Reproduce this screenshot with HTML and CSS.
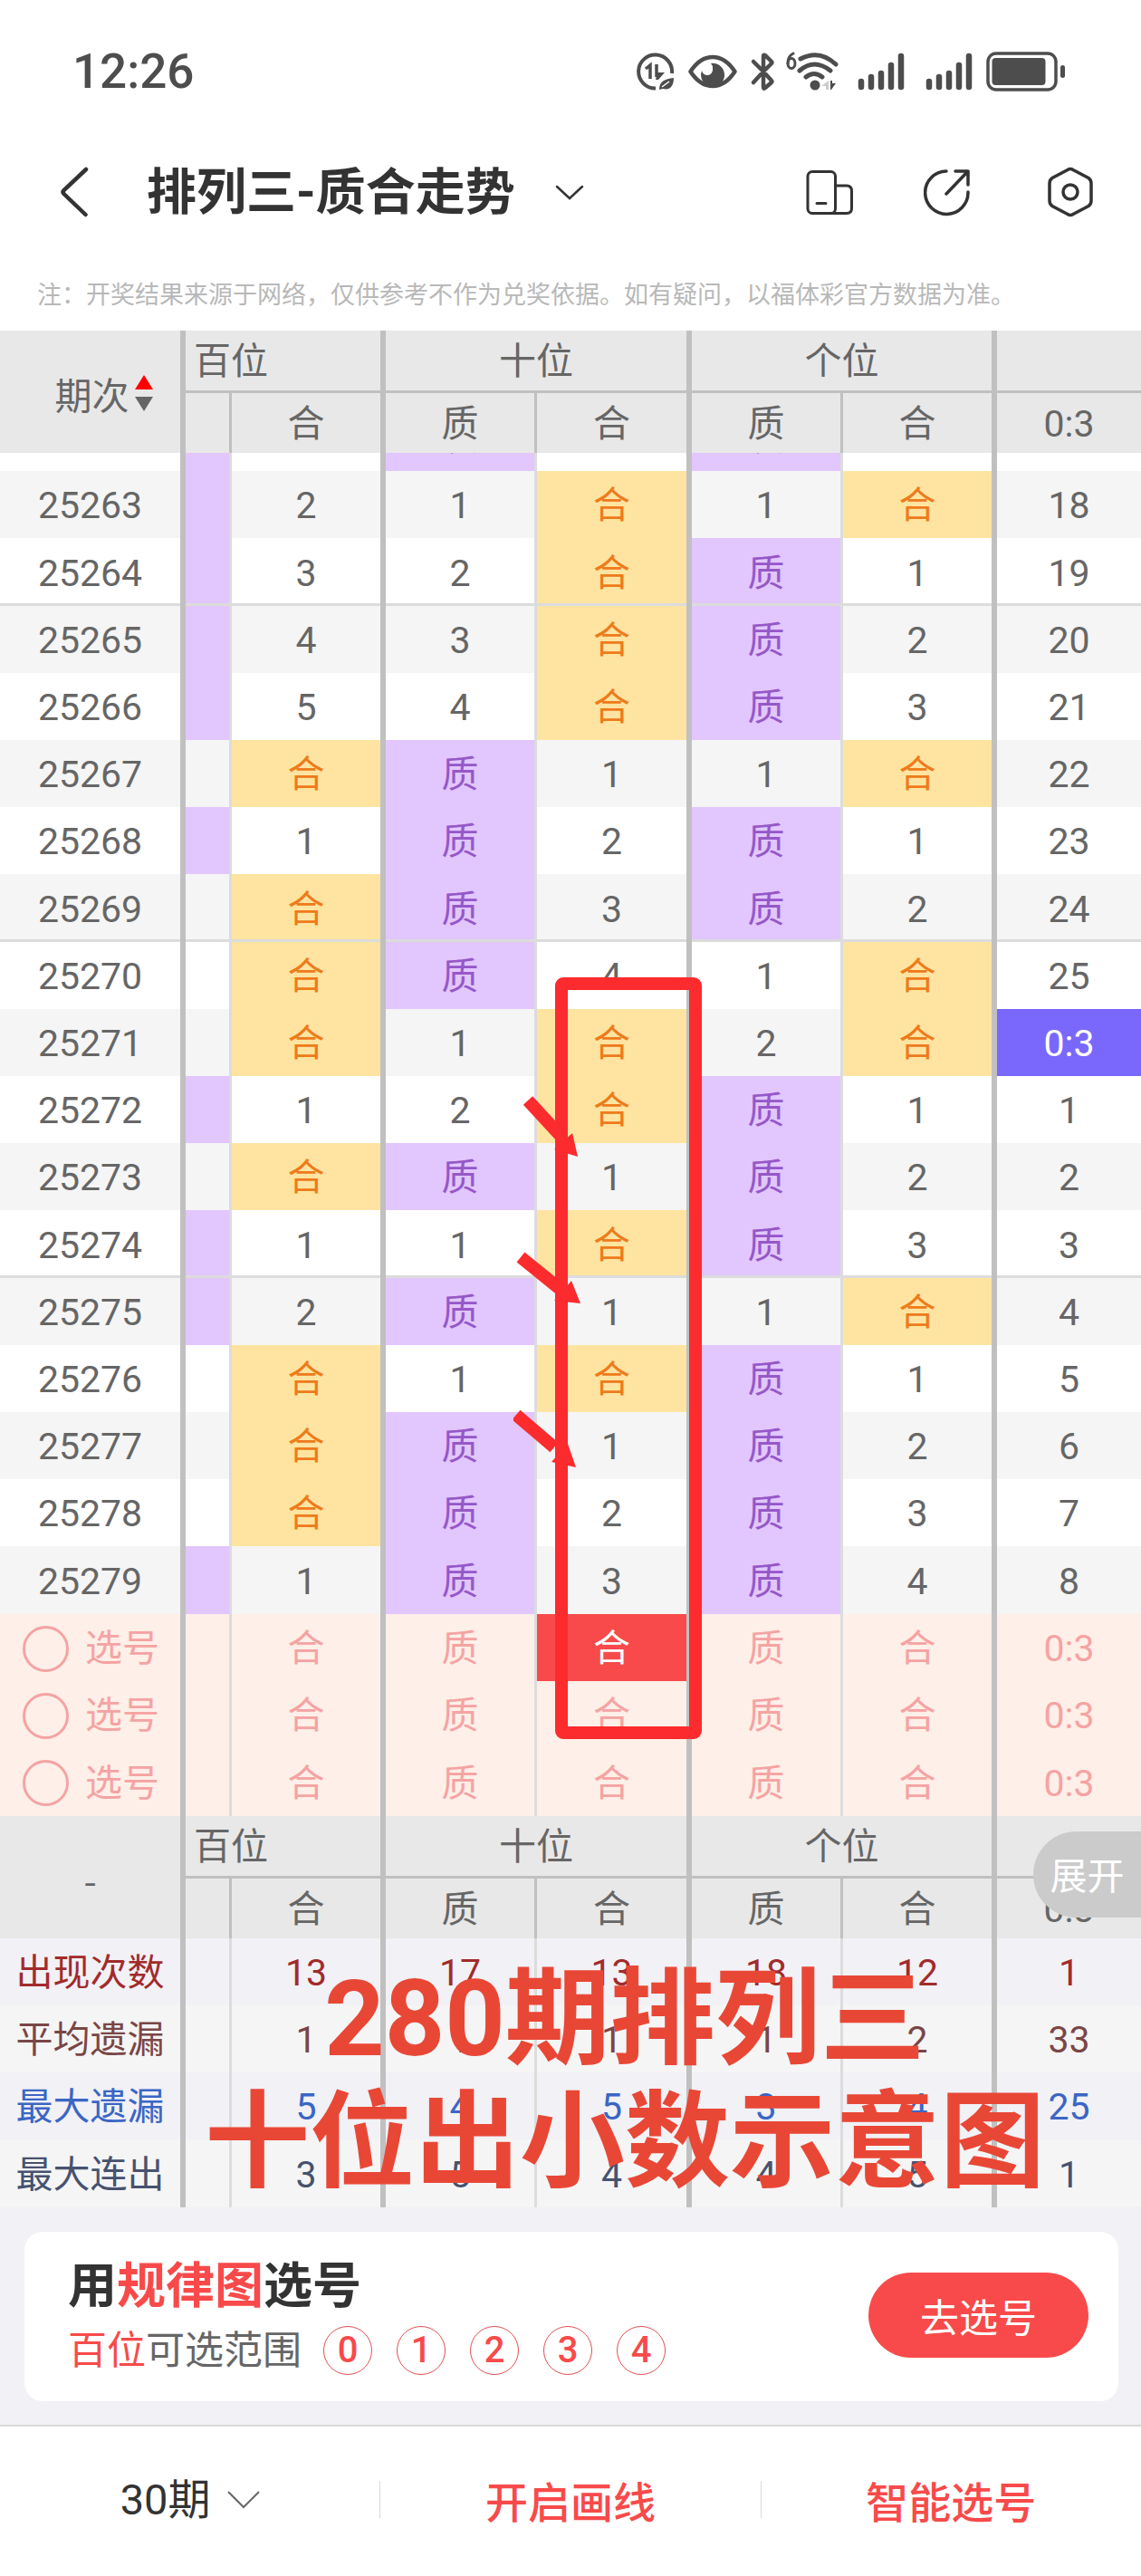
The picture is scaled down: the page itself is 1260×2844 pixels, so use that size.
FILE: index.html
```html
<!DOCTYPE html>
<html lang="zh-CN">
<head>
<meta charset="utf-8">
<title>排列三-质合走势</title>
<link rel="stylesheet" href="styles.css">
</head>
<body>

<div class="status">
	<span class="time">12:26</span>
	<div class="status-icons">
		<svg width="43" height="44" viewBox="703 56 43 44" fill="none" stroke="#4d4d4d" stroke-width="4">
			<path d="M742 80A18.500 18.500 0 1 0 724 96.500"/>
			<path d="M713 75l5-4v15M725 70v14" stroke-width="3.500"/>
			<path d="M726 79h8l-7 8h-3z" fill="#4d4d4d" stroke="none"/>
			<path d="M728 98c0-9 6-12 16-13 0 10-5 14-12 12z" fill="#4d4d4d" stroke="none"/>
			<path d="M731 95l8-6" stroke="#fff" stroke-width="1.500"/>
		</svg>
		<svg width="58" height="44" viewBox="758 56 58 44">
			<path d="M762.500 78Q773 62 787 62t24.500 16Q801 94 787 94t-24.500-16z" fill="none" stroke="#4d4d4d" stroke-width="4.500" stroke-linejoin="round"/>
			<path d="M785 69a13 13 0 1 1-10 8 6 6 0 0 0 12-2 7 7 0 0 0-2-6z" fill="#4d4d4d"/>
		</svg>
		<svg width="28" height="44" viewBox="828 56 28 44" fill="none" stroke="#4d4d4d" stroke-width="4.500" stroke-linecap="round" stroke-linejoin="round">
			<path d="M832 67l11 11 9-9q1-1 0-2l-7-7q-2-1-2 1v34q0 3 2 1l7-6q1-1 0-2l-9-10M832 90l11-12"/>
		</svg>
		<svg width="67" height="44" viewBox="868 56 67 44" fill="none" stroke="#4d4d4d" stroke-linecap="round">
			<path d="M876 58q-6 3-6 11" stroke-width="3"/>
			<ellipse cx="874" cy="69" rx="4" ry="5.500" stroke-width="3"/>
			<path d="M884 64Q905 53 923 70M883 77Q899 63 917 77M890 84Q899 77 908 84" stroke-width="5"/>
			<circle cx="900" cy="93" r="5.500" fill="#4d4d4d" stroke="none"/>
			<path d="M907 94l8-6v10h-3v-4z" fill="#ccc" stroke="none"/>
			<path d="M917 88h2v3h4l-5 7h-1z" fill="#4d4d4d" stroke="none"/>
		</svg>
		<svg width="63" height="44" viewBox="947 56 63 44" stroke="#4d4d4d" stroke-width="6.500" stroke-linecap="round">
			<path d="M951 89v6M962 84v11M973 80v15M984 71v24M995 61v34"/>
		</svg>
		<svg width="55" height="44" viewBox="1022 56 55 44" stroke="#4d4d4d" stroke-width="6.500" stroke-linecap="round">
			<path d="M1026 89v6M1037 84v11M1048 80v15M1059 71v24M1070 61v34"/>
		</svg>
		<svg width="88" height="44" viewBox="1089 56 88 44">
			<rect x="1091" y="58" width="75" height="40" rx="9" fill="none" stroke="#4d4d4d" stroke-width="3.500"/>
			<rect x="1095.500" y="63" width="59" height="30" rx="4" fill="#4d4d4d"/>
			<rect x="1171" y="71" width="5" height="14" rx="2.500" fill="#4d4d4d"/>
		</svg>
	</div>
</div>

<header class="nav">
	<button class="icon-btn back" aria-label="返回">
		<svg width="31" height="56" viewBox="67 183 31 56" fill="none" stroke="#333" stroke-width="4.500" stroke-linecap="round">
			<path d="M95 186L70.500 209q-2 2 0 4L94.500 236"/>
		</svg>
	</button>
	<label class="picker title">
		<select aria-label="走势类型"><option>排列三-质合走势</option></select>
		<svg width="32" height="18" viewBox="612 201 32 18" fill="none" stroke="#333" stroke-width="2.500" stroke-linecap="round">
			<path d="M614 204l14 13 14-13"/>
		</svg>
	</label>
	<div class="nav-icons">
		<button class="icon-btn" aria-label="布局">
			<svg width="52" height="56" viewBox="890 184 52 56" fill="none" stroke="#333" stroke-width="3" stroke-linecap="round">
				<rect x="892" y="189.500" width="30.500" height="46" rx="5"/>
				<path d="M922.500 205H935q5.500 0 5.500 6v19q0 5.500-5.500 5.500H918M902 224.500h10"/>
			</svg>
		</button>
		<button class="icon-btn" aria-label="分享">
			<svg width="59" height="56" viewBox="1020 184 59 56" fill="none" stroke="#333" stroke-width="3.500" stroke-linecap="round" stroke-linejoin="round">
				<path d="M1045 189A23.700 23.700 0 1 0 1069 212M1055 189h14v15M1069 189l-24 25"/>
			</svg>
		</button>
		<button class="icon-btn" aria-label="设置">
			<svg width="50" height="56" viewBox="1157 184 50 56" fill="none" stroke="#333" stroke-width="3.500">
				<path d="M1179 187.500q3-2 6 0l17 9q3 2 3 6v19q0 4-3 6l-17 9q-3 2-6 0l-17-9q-3-2-3-6v-19q0-4 3-6z"/>
				<circle cx="1182" cy="212" r="8"/>
			</svg>
		</button>
	</div>
</header>

<p class="note">注：开奖结果来源于网络，仅供参考不作为兑奖依据。如有疑问，以福体彩官方数据为准。</p>

<main class="chart">
	<table class="trend">
		<colgroup>
			<col class="c-issue"><col class="c-cut"><col class="c-last2"><col class="c-zhi"><col class="c-he"><col class="c-zhi"><col class="c-he2"><col class="c-ratio">
		</colgroup>
		<thead>
			<tr class="pos">
				<th rowspan="2" class="issue"><span class="sort">期次
					<svg width="20" height="40" viewBox="0 0 20 40"><path d="M10 0l10 16H0z" fill="#f00"/><path d="M0 24h20L10 40z" fill="#666"/></svg></span></th>
				<th colspan="2" class="cut">百位</th><th colspan="2">十位</th><th colspan="2">个位</th><th></th>
			</tr>
			<tr><th></th><th>合</th><th>质</th><th>合</th><th>质</th><th>合</th><th>0:3</th></tr>
		</thead>

		<!-- 开奖数据 -->
		<tbody class="data">
			<tr class="peek"><td></td><td class="z"></td><td></td><td class="z"><div>质</div></td><td></td><td class="z"><div>质</div></td><td></td><td></td></tr>
			<tr><td>25263</td><td class="z"></td><td>2</td><td>1</td><td class="h">合</td><td>1</td><td class="h">合</td><td>18</td></tr>
			<tr class="line"><td>25264</td><td class="z"></td><td>3</td><td>2</td><td class="h">合</td><td class="z">质</td><td>1</td><td>19</td></tr>
			<tr><td>25265</td><td class="z"></td><td>4</td><td>3</td><td class="h">合</td><td class="z">质</td><td>2</td><td>20</td></tr>
			<tr><td>25266</td><td class="z"></td><td>5</td><td>4</td><td class="h">合</td><td class="z">质</td><td>3</td><td>21</td></tr>
			<tr><td>25267</td><td></td><td class="h">合</td><td class="z">质</td><td>1</td><td>1</td><td class="h">合</td><td>22</td></tr>
			<tr><td>25268</td><td class="z"></td><td>1</td><td class="z">质</td><td>2</td><td class="z">质</td><td>1</td><td>23</td></tr>
			<tr class="line"><td>25269</td><td></td><td class="h">合</td><td class="z">质</td><td>3</td><td class="z">质</td><td>2</td><td>24</td></tr>
			<tr><td>25270</td><td></td><td class="h">合</td><td class="z">质</td><td>4</td><td>1</td><td class="h">合</td><td>25</td></tr>
			<tr><td>25271</td><td></td><td class="h">合</td><td>1</td><td class="h">合</td><td>2</td><td class="h">合</td><td class="hit">0:3</td></tr>
			<tr><td>25272</td><td class="z"></td><td>1</td><td>2</td><td class="h">合</td><td class="z">质</td><td>1</td><td>1</td></tr>
			<tr><td>25273</td><td></td><td class="h">合</td><td class="z">质</td><td>1</td><td class="z">质</td><td>2</td><td>2</td></tr>
			<tr class="line"><td>25274</td><td class="z"></td><td>1</td><td>1</td><td class="h">合</td><td class="z">质</td><td>3</td><td>3</td></tr>
			<tr><td>25275</td><td class="z"></td><td>2</td><td class="z">质</td><td>1</td><td>1</td><td class="h">合</td><td>4</td></tr>
			<tr><td>25276</td><td></td><td class="h">合</td><td>1</td><td class="h">合</td><td class="z">质</td><td>1</td><td>5</td></tr>
			<tr><td>25277</td><td></td><td class="h">合</td><td class="z">质</td><td>1</td><td class="z">质</td><td>2</td><td>6</td></tr>
			<tr><td>25278</td><td></td><td class="h">合</td><td class="z">质</td><td>2</td><td class="z">质</td><td>3</td><td>7</td></tr>
			<tr><td>25279</td><td class="z"></td><td>1</td><td class="z">质</td><td>3</td><td class="z">质</td><td>4</td><td>8</td></tr>
		</tbody>

		<!-- 选号 -->
		<tbody class="pick">
			<tr><td><label><input type="checkbox">选号</label></td><td></td><td>合</td><td>质</td><td class="on">合</td><td>质</td><td>合</td><td>0:3</td></tr>
			<tr><td><label><input type="checkbox">选号</label></td><td></td><td>合</td><td>质</td><td>合</td><td>质</td><td>合</td><td>0:3</td></tr>
			<tr><td><label><input type="checkbox">选号</label></td><td></td><td>合</td><td>质</td><td>合</td><td>质</td><td>合</td><td>0:3</td></tr>
		</tbody>

		<tbody class="head">
			<tr class="pos"><th rowspan="2">-</th><th colspan="2" class="cut">百位</th><th colspan="2">十位</th><th colspan="2">个位</th><th></th></tr>
			<tr><th></th><th>合</th><th>质</th><th>合</th><th>质</th><th>合</th><th>0:3</th></tr>
		</tbody>

		<!-- 统计 -->
		<tbody class="stat">
			<tr class="times"><td>出现次数</td><td></td><td>13</td><td>17</td><td>13</td><td>18</td><td>12</td><td>1</td></tr>
			<tr class="avg"><td>平均遗漏</td><td></td><td>1</td><td>1</td><td>1</td><td>1</td><td>2</td><td>33</td></tr>
			<tr class="max"><td>最大遗漏</td><td></td><td>5</td><td>4</td><td>5</td><td>3</td><td>4</td><td>25</td></tr>
			<tr class="run"><td>最大连出</td><td></td><td>3</td><td>5</td><td>4</td><td>4</td><td>5</td><td>1</td></tr>
		</tbody>
	</table>

	<!-- 红框和箭头 -->
	<svg class="marks" width="208" height="841" viewBox="567 1079 208 841" fill="none" stroke="#fc2b2e" stroke-width="14">
		<rect x="620" y="1086" width="148" height="827" rx="2" stroke-linejoin="round"/>
		<path d="M583 1215l36 39M575 1388l42 34M570 1562l42 36"/>
		<path d="M632 1251l6 26-26-8zM631 1414l10 25-29-3zM627 1594l9 26-27-6z" fill="#fc2b2e" stroke="none"/>
	</svg>

	<button class="expand">展开</button>
	<div class="caption">280期排列三<br>十位出小数示意图</div>
</main>

<section class="promo">
	<div class="card">
		<div>
			<h2>用<em>规律图</em>选号</h2>
			<div class="range"><span><em>百位</em>可选范围</span><ul><li>0</li><li>1</li><li>2</li><li>3</li><li>4</li></ul></div>
		</div>
		<button class="go">去选号</button>
	</div>
</section>

<footer class="tabs">
	<div class="tab">
		<label class="picker">
			<select aria-label="期数"><option>30期</option></select>
			<svg width="36" height="20" viewBox="0 0 36 20" fill="none" stroke="#666" stroke-width="2"><path d="M1 1l17 17L35 1"/></svg>
		</label>
	</div>
	<div class="tab"><button>开启画线</button></div>
	<div class="tab"><button>智能选号</button></div>
</footer>

</body>
</html>
```

FILE: styles.css
```css
* {
	box-sizing: border-box;
}
body {
	margin: 0;
	background-color: white;
	color: #666;
	font-family: Roboto, "Noto Sans CJK SC", sans-serif;
	font-size: 41px;
}
button, select {
	border: 0;
	padding: 0;
	background: none;
	color: inherit;
	font: inherit;
}
select {
	appearance: none;
}
svg {
	display: block;
}
em {
	color: #f84a4a;
	font-style: normal;
}

/* 状态栏 */
.status {
	display: flex;
	justify-content: space-between;
	align-items: center;
	height: 157px;
	padding: 0 83px 0 80px;
}
.time {
	color: #4d4d4d;
	font-size: 53px;
	font-weight: 500;
}
.status-icons {
	display: flex;
	gap: 12px;
}

/* 标题栏 */
.nav {
	display: flex;
	align-items: center;
	height: 110px;
	margin-bottom: 20px;
	padding: 0 53px 0 67px;
}
.back {
	margin-right: 64px;
}
.picker {
	display: flex;
	align-items: center;
	gap: 18px;
	color: #333;
}
.title {
	gap: 44px;
	font-size: 55px;
	font-weight: bold;
}
.nav-icons {
	display: flex;
	gap: 78px;
	margin-left: auto;
}
.note {
	margin: 0;
	padding-left: 41px;
	color: #b8b8b8;
	font-size: 27px;
	line-height: 78px;
}

/* 走势表 */
.chart {
	position: relative;
}
.trend {
	width: 100%;
	table-layout: fixed;
	border-collapse: separate;
	border-spacing: 0;
	line-height: 48px;
	text-align: center;
}
.c-issue {width: 205px;}
.c-cut {width: 51px;}
.c-last2 {width: 170px;}
.c-zhi {width: 167px;}
.c-he {width: 171px;}
.c-he2 {width: 170px;}
.c-ratio {width: 159px;}

.trend th, .trend td {
	height: 74px;
	padding: 2px 0 0;
	border: 0 solid #c0c0c0;
	font-weight: normal;
}
.trend tbody tr:last-child td, .trend .line td {
	height: 75px;
}
.trend tr > :nth-last-child(even) {
	border-right-width: 6px;
}
.trend td:nth-last-child(2n+3) {
	border-right: 3px solid #dcdcdc;
}
.trend th:nth-last-child(2n+3) {
	border-right-width: 3px;
}
.trend th {
	height: 66px;
	background-color: #e8e8e8;
}
.trend .pos th {
	height: 69px;
	border-right-width: 6px;
	border-bottom-width: 3px;
}
.trend .pos th[rowspan] {
	border-bottom-width: 0;
	font-family: "Noto Sans CJK SC", sans-serif;
}
.trend .pos th:last-child {
	border-right-width: 0;
}
.trend .cut {
	padding-left: 9px;
	text-align: left;
}
.sort {
	display: flex;
	justify-content: center;
	align-items: center;
	gap: 6px;
	padding-left: 30px;
}

.data tr:nth-child(even) {
	background-color: #f5f5f5;
}
.trend .peek td {
	height: 20px;
	padding: 0;
}
.peek div {
	display: flex;
	justify-content: center;
	align-items: flex-end;
	height: 20px;
	line-height: 74px;
	overflow: hidden;
}
.trend .z {
	background-color: #e2c6fe;
	color: #9558c8;
}
.trend .h {
	background-color: #ffe4a1;
	color: #ee7b1b;
}
.trend .hit {
	background-color: #7a68fd;
	color: white;
}
.line td {
	box-shadow: inset 0 -3px #dcdcdc;
}

.pick {
	background-color: #feefe8;
	color: #f5a3a3;
}
.pick label {
	display: flex;
	align-items: center;
	gap: 18px;
	padding-left: 25px;
}
.pick input {
	appearance: none;
	width: 51px;
	height: 51px;
	margin: 0;
	border: 3px solid #f5a3a3;
	border-radius: 50%;
}
.trend .on {
	background-color: #f84a4a;
	color: white;
}

.stat tr:nth-child(odd) {
	background-color: #f1f1f6;
}
.stat tr:nth-child(even) {
	background-color: #f5f5f5;
}
.times {color: #a22b2b;}
.avg {color: #7a4646;}
.max {color: #3b66c4;}
.run {color: #47526f;}

/* 表格上面的标注 */
.marks {
	position: absolute;
	top: 714px;
	left: 45%;
}
.expand {
	position: absolute;
	right: 0;
	bottom: 320px;
	width: 119px;
	height: 95px;
	padding-bottom: 4px;
	border-radius: 48px 0 0 48px;
	background-color: #cbcbcb;
	color: white;
}
.caption {
	position: absolute;
	right: 0;
	bottom: 4px;
	left: 120px;
	color: #e94736;
	font-size: 116px;
	font-weight: bold;
	line-height: 136px;
	text-align: center;
}

/* 选号卡片 */
.promo {
	padding: 27px 25px 26px 27px;
	background-color: #f1f1f6;
}
.card {
	display: flex;
	justify-content: space-between;
	align-items: center;
	height: 187px;
	padding: 0 33px 4px 48px;
	border-radius: 20px;
	background-color: white;
}
.card h2 {
	margin: 0;
	color: #333;
	font-size: 54px;
	font-weight: bold;
	line-height: 78px;
}
.range {
	display: flex;
	align-items: center;
	gap: 24px;
	font-size: 43px;
	line-height: 62px;
}
.range ul {
	display: flex;
	gap: 27px;
	margin: 0;
	padding: 0;
	list-style: none;
}
.range li {
	width: 54px;
	height: 54px;
	border: 1px solid #e05050;
	border-radius: 50%;
	color: #f84a4a;
	font-size: 40px;
	font-weight: 500;
	line-height: 52px;
	text-align: center;
}
.go {
	width: 243px;
	height: 94px;
	border-radius: 47px;
	background-color: #f84a4a;
	color: white;
	font-size: 43px;
}

/* 底栏 */
.tabs {
	display: flex;
	align-items: center;
	height: 167px;
	padding-bottom: 4px;
	border-top: 2px solid #d9d9d9;
	font-size: 47px;
}
.tab {
	display: flex;
	flex: 1;
	justify-content: center;
	align-items: center;
	height: 41px;
	border-left: 1px solid #d9d9d9;
	color: #f84a4a;
	font-weight: 500;
}
.tab:first-child {
	border-left: 0;
	font-weight: normal;
}
```
